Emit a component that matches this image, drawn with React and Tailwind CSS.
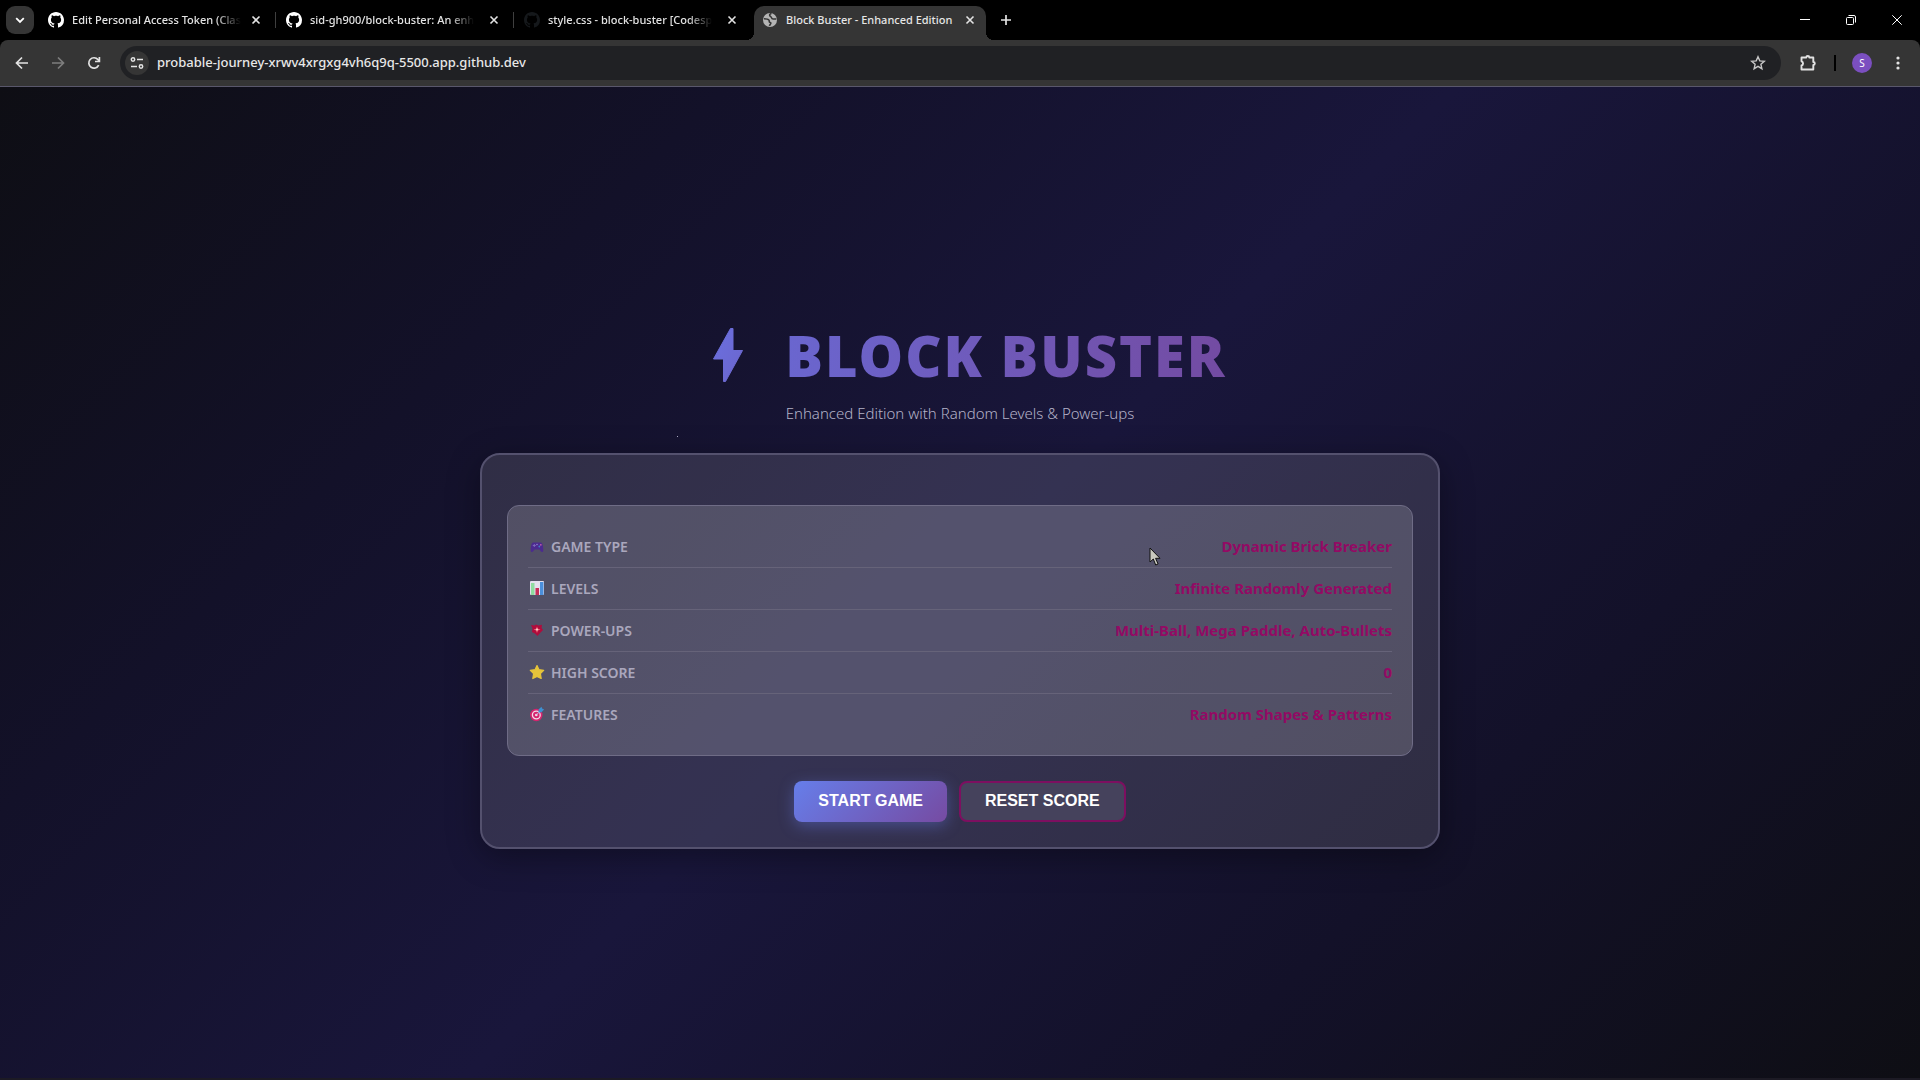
import React from "react";

const githubPath =
  "M8 0C3.58 0 0 3.58 0 8c0 3.54 2.29 6.53 5.47 7.59.4.07.55-.17.55-.38 0-.19-.01-.82-.01-1.49-2.01.37-2.53-.49-2.69-.94-.09-.23-.48-.94-.82-1.13-.28-.15-.68-.52-.01-.53.63-.01 1.08.58 1.23.82.72 1.21 1.87.87 2.33.66.07-.52.28-.87.51-1.07-1.78-.2-3.64-.89-3.64-3.95 0-.87.31-1.59.82-2.15-.08-.2-.36-1.02.08-2.12 0 0 .67-.21 2.2.82.64-.18 1.32-.27 2-.27s1.36.09 2 .27c1.53-1.04 2.2-.82 2.2-.82.44 1.1.16 1.92.08 2.12.51.56.82 1.27.82 2.15 0 3.07-1.87 3.75-3.65 3.95.29.25.54.73.54 1.48 0 1.07-.01 1.93-.01 2.2 0 .21.15.46.55.38A8.01 8.01 0 0 0 16 8c0-4.42-3.58-8-8-8Z";

function GithubIcon({ className }) {
  return (
    <svg viewBox="0 0 16 16" className={className} fill="currentColor" aria-hidden="true">
      <path d={githubPath} />
    </svg>
  );
}

function GlobeIcon() {
  return (
    <svg viewBox="0 0 16 16" className="size-4 shrink-0" aria-hidden="true">
      <circle cx="8" cy="8" r="7" fill="#b4b4b4" />
      <path d="M2 6.800c2 0 4.200.2 5 1.300.6.8-.2 1.700.8 2.100 1 .3 1.400 1 .7 1.900-.5.600-.9 1-1 1.700" fill="none" stroke="#353535" strokeWidth="1.600" />
      <path d="M9.500 1.500c-1.800.6-2.300 1.400-1.700 2.300.7.900 1.500.8 1.700 1.900.2 1 1 1.300 2 1.200h2.800" fill="none" stroke="#353535" strokeWidth="1.500" />
    </svg>
  );
}

function CloseIcon({ className }) {
  return (
    <svg viewBox="0 0 10 10" className={className} fill="none" stroke="currentColor" strokeWidth="1.6" aria-hidden="true">
      <path d="M1.500 1.500 8.500 8.500M8.500 1.500 1.500 8.500" />
    </svg>
  );
}

const tabs = [
  { title: "Edit Personal Access Token (Clas", icon: "github" },
  { title: "sid-gh900/block-buster: An enh", icon: "github" },
  { title: "style.css - block-buster [Codesp", icon: "dim" },
  { title: "Block Buster - Enhanced Edition", icon: "globe", active: true },
];

function Tab({ title, icon, active, last }) {
  return (
    <div
      className={
        active
          ? "relative flex h-[34px] w-[232px] items-center rounded-t-[10px] bg-[#353535] pr-[10px] pb-[6px] pl-2"
          : "relative flex h-[34px] w-[232px] items-center pr-[10px] pb-[6px] pl-2"
      }
    >
      {active && (
        <>
          <span className="absolute bottom-0 -left-2 size-2 bg-[radial-gradient(circle_at_0_0,#000_8px,#353535_8px)]" />
          <span className="absolute -right-2 bottom-0 size-2 bg-[radial-gradient(circle_at_100%_0,#000_8px,#353535_8px)]" />
        </>
      )}
      {icon === "github" && <GithubIcon className="size-4 shrink-0 text-white" />}
      {icon === "dim" && <GithubIcon className="size-4 shrink-0 text-[#15181b]" />}
      {icon === "globe" && <GlobeIcon />}
      <span
        className={
          active
            ? "ml-2 text-[11px] font-medium whitespace-nowrap text-[#e6e6e6]"
            : "ml-2 mask-r-from-85% text-[11px] font-medium whitespace-nowrap text-[#e3e3e3]"
        }
      >
        {title}
      </span>
      <button type="button" aria-label={"Close " + title} className="ml-auto flex size-3 items-center justify-center text-[#e3e3e3]">
        <CloseIcon className="size-[10px]" />
      </button>
      {!active && !last && <span className="absolute top-[6px] -right-1 h-4 w-px bg-[#3f3f3f]" />}
    </div>
  );
}

function BrowserChrome() {
  return (
    <header className="shrink-0 bg-black font-['Noto_Sans','Open_Sans',sans-serif]">
      <div className="flex h-10 items-start pt-[6px] pl-[6px]">
        <button type="button" aria-label="Search tabs" className="flex size-7 items-center justify-center rounded-[9px] bg-[#353535] text-white">
          <svg viewBox="0 0 10 10" className="size-[10px]" fill="none" stroke="currentColor" strokeWidth="1.8">
            <path d="M1.200 3.200 5 7 8.800 3.200" />
          </svg>
        </button>
        <nav className="ml-[6px] flex gap-[6px]" aria-label="Tabs">
          {tabs.map((t, i) => (
            <Tab key={t.title} {...t} last={i === 2} />
          ))}
        </nav>
        <button type="button" aria-label="New tab" className="ml-[6px] flex size-7 items-center justify-center text-[#e3e3e3]">
          <svg viewBox="0 0 12 12" className="size-3" fill="none" stroke="currentColor" strokeWidth="1.700">
            <path d="M6 1v10M1 6h10" />
          </svg>
        </button>
        <div className="ml-auto flex text-white">
          <button type="button" aria-label="Minimize" className="flex h-7 w-[46px] items-center justify-center">
            <svg viewBox="0 0 10 10" className="size-[10px]" stroke="currentColor">
              <path d="M0 4.500h10" />
            </svg>
          </button>
          <button type="button" aria-label="Restore" className="flex h-7 w-[46px] items-center justify-center">
            <svg viewBox="0 0 10 10" className="size-[10px]" fill="none" stroke="currentColor">
              <rect x=".5" y="2.500" width="7" height="7" rx="1" />
              <path d="M2.500.5h5.500a1.500 1.500 0 0 1 1.500 1.500v5.500" />
            </svg>
          </button>
          <button type="button" aria-label="Close window" className="flex h-7 w-[46px] items-center justify-center">
            <svg viewBox="0 0 10 10" className="size-[10px]" fill="none" stroke="currentColor">
              <path d="m.3.3 9.400 9.400M9.700.3.3 9.700" />
            </svg>
          </button>
        </div>
      </div>

      <div className="flex h-[47px] items-center rounded-t-lg border-b border-[#59576b] bg-[#353535] pr-[14px] pl-1 text-[#e3e3e3]">
        <button type="button" aria-label="Back" className="flex size-9 items-center justify-center">
          <svg viewBox="0 0 16 16" className="size-4" fill="none" stroke="currentColor" strokeWidth="1.700">
            <path d="M14 8H3M8 2.500 2.500 8 8 13.500" />
          </svg>
        </button>
        <button type="button" aria-label="Forward" className="flex size-9 items-center justify-center text-[#7d7d7d]">
          <svg viewBox="0 0 16 16" className="size-4" fill="none" stroke="currentColor" strokeWidth="1.700">
            <path d="M2 8h11M8 2.500 13.500 8 8 13.500" />
          </svg>
        </button>
        <button type="button" aria-label="Reload" className="flex size-9 items-center justify-center">
          <svg viewBox="0 0 16 16" className="size-4" fill="none" stroke="currentColor" strokeWidth="1.700">
            <path d="M12.700 10.200A5.200 5.200 0 1 1 12 4.600L13.200 6" />
            <path d="M13.400 2v4.500H9" />
          </svg>
        </button>
        <div className="ml-2 flex h-[34px] flex-1 items-center rounded-full bg-[#202124] pr-[15px] pl-[5px]">
          <button type="button" aria-label="Site information" className="flex size-6 shrink-0 items-center justify-center rounded-full bg-[#353535]">
            <svg viewBox="0 0 16 16" className="size-4" fill="none" stroke="currentColor" strokeWidth="1.500">
              <circle cx="4" cy="4.500" r="1.700" />
              <path d="M8 4.500h6M2 11.500h6" />
              <circle cx="12" cy="11.500" r="1.700" />
            </svg>
          </button>
          <input
            aria-label="Address"
            readOnly
            value="probable-journey-xrwv4xrgxg4vh6q9q-5500.app.github.dev"
            className="ml-2 min-w-0 flex-1 bg-transparent text-[13px] font-medium text-[#e8e8e8] outline-none"
          />
          <button type="button" aria-label="Bookmark" className="text-[#c7c7c7]">
            <svg viewBox="0 0 16 16" className="size-4" fill="none" stroke="currentColor" strokeWidth="1.400" strokeLinejoin="miter">
              <path d="m8 1.800 1.800 4.100 4.500.4-3.400 3 1 4.400L8 11.400l-3.900 2.300 1-4.400-3.400-3 4.500-.4Z" />
            </svg>
          </button>
        </div>
        <button type="button" aria-label="Extensions" className="ml-[18px]">
          <svg viewBox="0 0 18 18" className="size-[18px]" fill="none" stroke="currentColor" strokeWidth="1.900" strokeLinejoin="round">
            <path d="M2.500 3.500h4.800a1.500 1.500 0 0 1 3 0h4v4.500a1.500 1.500 0 0 1 0 3v4.500H2.500v-4a2.200 2.200 0 0 0 0-4.200Z" />
          </svg>
        </button>
        <span className="ml-[17px] h-4 w-[2px] bg-black" />
        <button type="button" aria-label="Profile" className="ml-4 flex size-5 items-center justify-center rounded-full bg-[#7b4fc0] text-[10px] leading-none text-white">
          S
        </button>
        <button type="button" aria-label="Menu" className="ml-[18px]">
          <svg viewBox="0 0 16 16" className="size-4" fill="currentColor">
            <circle cx="8" cy="3" r="1.600" />
            <circle cx="8" cy="8" r="1.600" />
            <circle cx="8" cy="13" r="1.600" />
          </svg>
        </button>
      </div>
    </header>
  );
}

function GamepadIcon() {
  return (
    <svg viewBox="0 0 16 16" className="size-4" aria-hidden="true">
      <path d="M4 4.500h8c1.500 0 2.300 4 2.300 8 0 1.800-1.800 1.800-2.500.8L10.500 11.500h-5l-1.300 1.800c-.7 1-2.500 1-2.500-.8 0-4 .8-8 2.300-8Z" fill="#4c2a8f" />
      <path d="M5.300 6v3M3.800 7.500h3" stroke="#7b68b8" strokeWidth="1" />
      <circle cx="10.300" cy="8.500" r=".9" fill="#3f7fc4" />
      <circle cx="11.800" cy="6.800" r=".9" fill="#c05aa8" />
      <circle cx="8" cy="6.500" r=".8" fill="#8f7fd0" />
    </svg>
  );
}

function ChartIcon() {
  return (
    <svg viewBox="0 0 16 16" className="size-4" aria-hidden="true">
      <rect x="1" y="1" width="14" height="14" rx="1" fill="#e4dfee" />
      <rect x="2" y="3" width="3.500" height="12" fill="#8fdca0" />
      <rect x="6.500" y="8" width="3.500" height="7" fill="#c62d58" />
      <rect x="11" y="2" width="3.500" height="13" fill="#4b8fdc" />
    </svg>
  );
}

function PowerIcon() {
  return (
    <svg viewBox="0 0 16 16" className="size-4" aria-hidden="true">
      <path d="m2 3 3.500.5L7 2.500 9.500 3.500 13 2.800 12.500 6 14 8l-2.500 2.500L8.500 14 6 11.500 3 10l.5-3.500Z" fill="#b00c3c" />
      <path d="m8 4.500.9 2.300 2.600.7-2.600.9L8 11l-.9-2.600-2.600-.9 2.600-.7Z" fill="#f06a78" />
      <circle cx="8" cy="7.500" r="1" fill="#fbd3d3" />
    </svg>
  );
}

function StarIcon() {
  return (
    <svg viewBox="0 0 16 16" className="size-4" aria-hidden="true">
      <path d="m8 1.500 2 4.200 4.700.6-3.300 3.400.8 4.800L8 12.400l-4.200 2.100.8-4.800L1.300 6.300 6 5.700Z" fill="#e6c43a" stroke="#e6c43a" strokeWidth="1.200" strokeLinejoin="round" />
    </svg>
  );
}

function TargetIcon() {
  return (
    <svg viewBox="0 0 16 16" className="size-4" aria-hidden="true">
      <circle cx="7.300" cy="9" r="6.200" fill="#d6246e" />
      <circle cx="7.300" cy="9" r="3.900" fill="none" stroke="#f3dbe8" strokeWidth="1.300" />
      <circle cx="7.300" cy="9" r="1.300" fill="#f3dbe8" />
      <path d="M7.500 8.800 11.500 4.800" stroke="#b8c8e8" strokeWidth="1" />
      <path d="m9.500 6.500.2-3.300L12.500.8l.6 1.800 2 .8-2.500 2.900Z" fill="#3d8fd0" />
    </svg>
  );
}

const info = [
  { icon: <GamepadIcon />, label: "GAME TYPE", value: "Dynamic Brick Breaker" },
  { icon: <ChartIcon />, label: "LEVELS", value: "Infinite Randomly Generated" },
  { icon: <PowerIcon />, label: "POWER-UPS", value: "Multi-Ball, Mega Paddle, Auto-Bullets" },
  { icon: <StarIcon />, label: "HIGH SCORE", value: "0" },
  { icon: <TargetIcon />, label: "FEATURES", value: "Random Shapes & Patterns" },
];

export default function App() {
  return (
    <div className="relative flex min-h-screen flex-col bg-black">
      <BrowserChrome />
      <main className="flex flex-1 flex-col items-center justify-center border-b-2 border-[#1c1a24] bg-[linear-gradient(135deg,#0e0e14_0%,#131129_25%,#19163b_50%,#131129_75%,#0e0e14_100%)] px-5 font-['Noto_Sans','Open_Sans',sans-serif]">
        <div className="flex items-center pb-2 pl-5">
          <svg viewBox="0 0 30 54" className="mr-[42px] h-[54px] w-[30px]" aria-hidden="true">
            <defs>
              <linearGradient id="bolt" x1="0" y1="0" x2="1" y2="1">
                <stop offset="0" stopColor="#6a6fe0" />
                <stop offset="1" stopColor="#6c66cc" />
              </linearGradient>
            </defs>
            <path d="M17.500.5H20v22h9.500L12.500 53.500H10.500V31H.5Z" fill="url(#bolt)" stroke="url(#bolt)" strokeLinejoin="round" />
          </svg>
          <h1 className="bg-linear-to-r from-[#6a66cf] to-[#734ba2] bg-clip-text text-[56px] leading-[76px] font-black tracking-[2px] whitespace-nowrap text-transparent">BLOCK BUSTER</h1>
        </div>
        <p className="text-[15px] leading-6 font-light text-[#b3b2c8]">Enhanced Edition with Random Levels &amp; Power-ups</p>

        <section className="mt-7 w-full max-w-[960px] rounded-[20px] border-2 border-[#54516e] bg-white/12 p-[25px] shadow-[0_8px_32px_rgba(0,0,0,0.35)]">
          <dl className="mt-[25px] rounded-xl border border-[#6f6c86] bg-white/16 p-5">
            {info.map((row) => (
              <div key={row.label} className="flex items-center justify-between border-b border-[#666379] py-[10px] last:border-b-0">
                <dt className="flex h-[21px] items-center gap-[6px] pl-[1px] text-[14px] font-semibold text-[#aaa7bd]">
                  {row.icon}
                  {row.label}
                </dt>
                <dd className="text-[15px] leading-[21px] font-bold text-[#930a64]">{row.value}</dd>
              </div>
            ))}
          </dl>
          <div className="mt-[25px] flex justify-center gap-3 font-['Liberation_Sans',sans-serif] text-[16px] font-bold text-white">
            <button type="button" className="h-[41px] rounded-lg bg-[linear-gradient(135deg,#667eea,#764ba2)] px-6 shadow-[0_4px_15px_rgba(102,126,234,0.4)]">START GAME</button>
            <button type="button" className="h-[41px] rounded-lg border-2 border-[#7d0f60] bg-[#45425c] px-6">RESET SCORE</button>
          </div>
        </section>
      </main>
      <span className="pointer-events-none absolute top-[436px] left-[677px] size-px bg-[#a9a8bf]" />
      <svg viewBox="0 0 12 20" className="pointer-events-none absolute top-[547px] left-[1149px] h-5 w-3" aria-hidden="true">
        <path d="M1 1v14l3.300-3 2.400 6 2.400-1-2.500-5.700H11Z" fill="#c9c9bf" stroke="#111" strokeWidth="1" />
      </svg>
    </div>
  );
}
